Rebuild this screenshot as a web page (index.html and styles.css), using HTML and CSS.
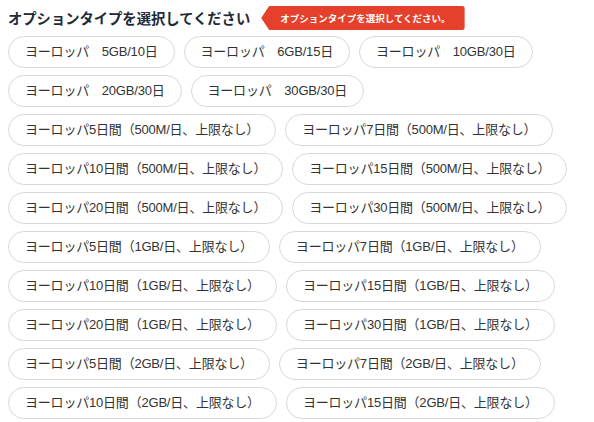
FILE: index.html
```html
<!DOCTYPE html>
<html lang="ja">
<head>
<meta charset="utf-8">
<title>オプションタイプ</title>
<link rel="stylesheet" href="styles.css">
</head>
<body>
<div class="page">
  <div class="header">
    <h2 class="title">オプションタイプを選択してください</h2>
    <span class="badge">オプションタイプを選択してください。</span>
  </div>
  <div class="options">
    <button class="opt">ヨーロッパ　5GB/10日</button>
    <button class="opt">ヨーロッパ　6GB/15日</button>
    <button class="opt">ヨーロッパ　10GB/30日</button>
    <button class="opt">ヨーロッパ　20GB/30日</button>
    <button class="opt">ヨーロッパ　30GB/30日</button>
    <button class="opt">ヨーロッパ5日間（500M/日、上限なし）</button>
    <button class="opt">ヨーロッパ7日間（500M/日、上限なし）</button>
    <button class="opt">ヨーロッパ10日間（500M/日、上限なし）</button>
    <button class="opt">ヨーロッパ15日間（500M/日、上限なし）</button>
    <button class="opt">ヨーロッパ20日間（500M/日、上限なし）</button>
    <button class="opt">ヨーロッパ30日間（500M/日、上限なし）</button>
    <button class="opt">ヨーロッパ5日間（1GB/日、上限なし）</button>
    <button class="opt">ヨーロッパ7日間（1GB/日、上限なし）</button>
    <button class="opt">ヨーロッパ10日間（1GB/日、上限なし）</button>
    <button class="opt">ヨーロッパ15日間（1GB/日、上限なし）</button>
    <button class="opt">ヨーロッパ20日間（1GB/日、上限なし）</button>
    <button class="opt">ヨーロッパ30日間（1GB/日、上限なし）</button>
    <button class="opt">ヨーロッパ5日間（2GB/日、上限なし）</button>
    <button class="opt">ヨーロッパ7日間（2GB/日、上限なし）</button>
    <button class="opt">ヨーロッパ10日間（2GB/日、上限なし）</button>
    <button class="opt">ヨーロッパ15日間（2GB/日、上限なし）</button>
  </div>
</div>
</body>
</html>
```
FILE: styles.css
```css
* { box-sizing: border-box; }
html, body {
  margin: 0;
  padding: 0;
  background: #ffffff;
  font-family: "Liberation Sans", "Noto Sans CJK JP", sans-serif;
}
.page {
  padding: 6px 8px 0 8px;
}
.header {
  display: flex;
  align-items: center;
  height: 24px;
  gap: 11px;
}
.title {
  margin: 0;
  font-size: 14.3px;
  font-weight: bold;
  color: #1f2a37;
  line-height: 24px;
  font-family: "Noto Sans CJK JP", sans-serif;
}
.badge {
  display: flex;
  align-items: center;
  height: 24px;
  padding: 0 14px 0 19px;
  background: #e5402b;
  color: #ffffff;
  font-family: "Noto Sans CJK JP", sans-serif;
  font-size: 9.5px;
  font-weight: bold;
  border-radius: 0 3px 3px 0;
  clip-path: polygon(8px 0, 100% 0, 100% 100%, 8px 100%, 0 50%);
}
.options {
  display: flex;
  flex-wrap: wrap;
  gap: 7px 9px;
  margin-top: 6px;
}
.opt {
  height: 32px;
  padding: 0 16px;
  border: 1px solid #d9d9d9;
  border-radius: 16px;
  background: #ffffff;
  color: #333333;
  font-family: "Liberation Sans", "Noto Sans CJK JP", sans-serif;
  font-size: 13px;
  letter-spacing: -0.2px;
  line-height: 30px;
  white-space: nowrap;
  cursor: pointer;
}
```
